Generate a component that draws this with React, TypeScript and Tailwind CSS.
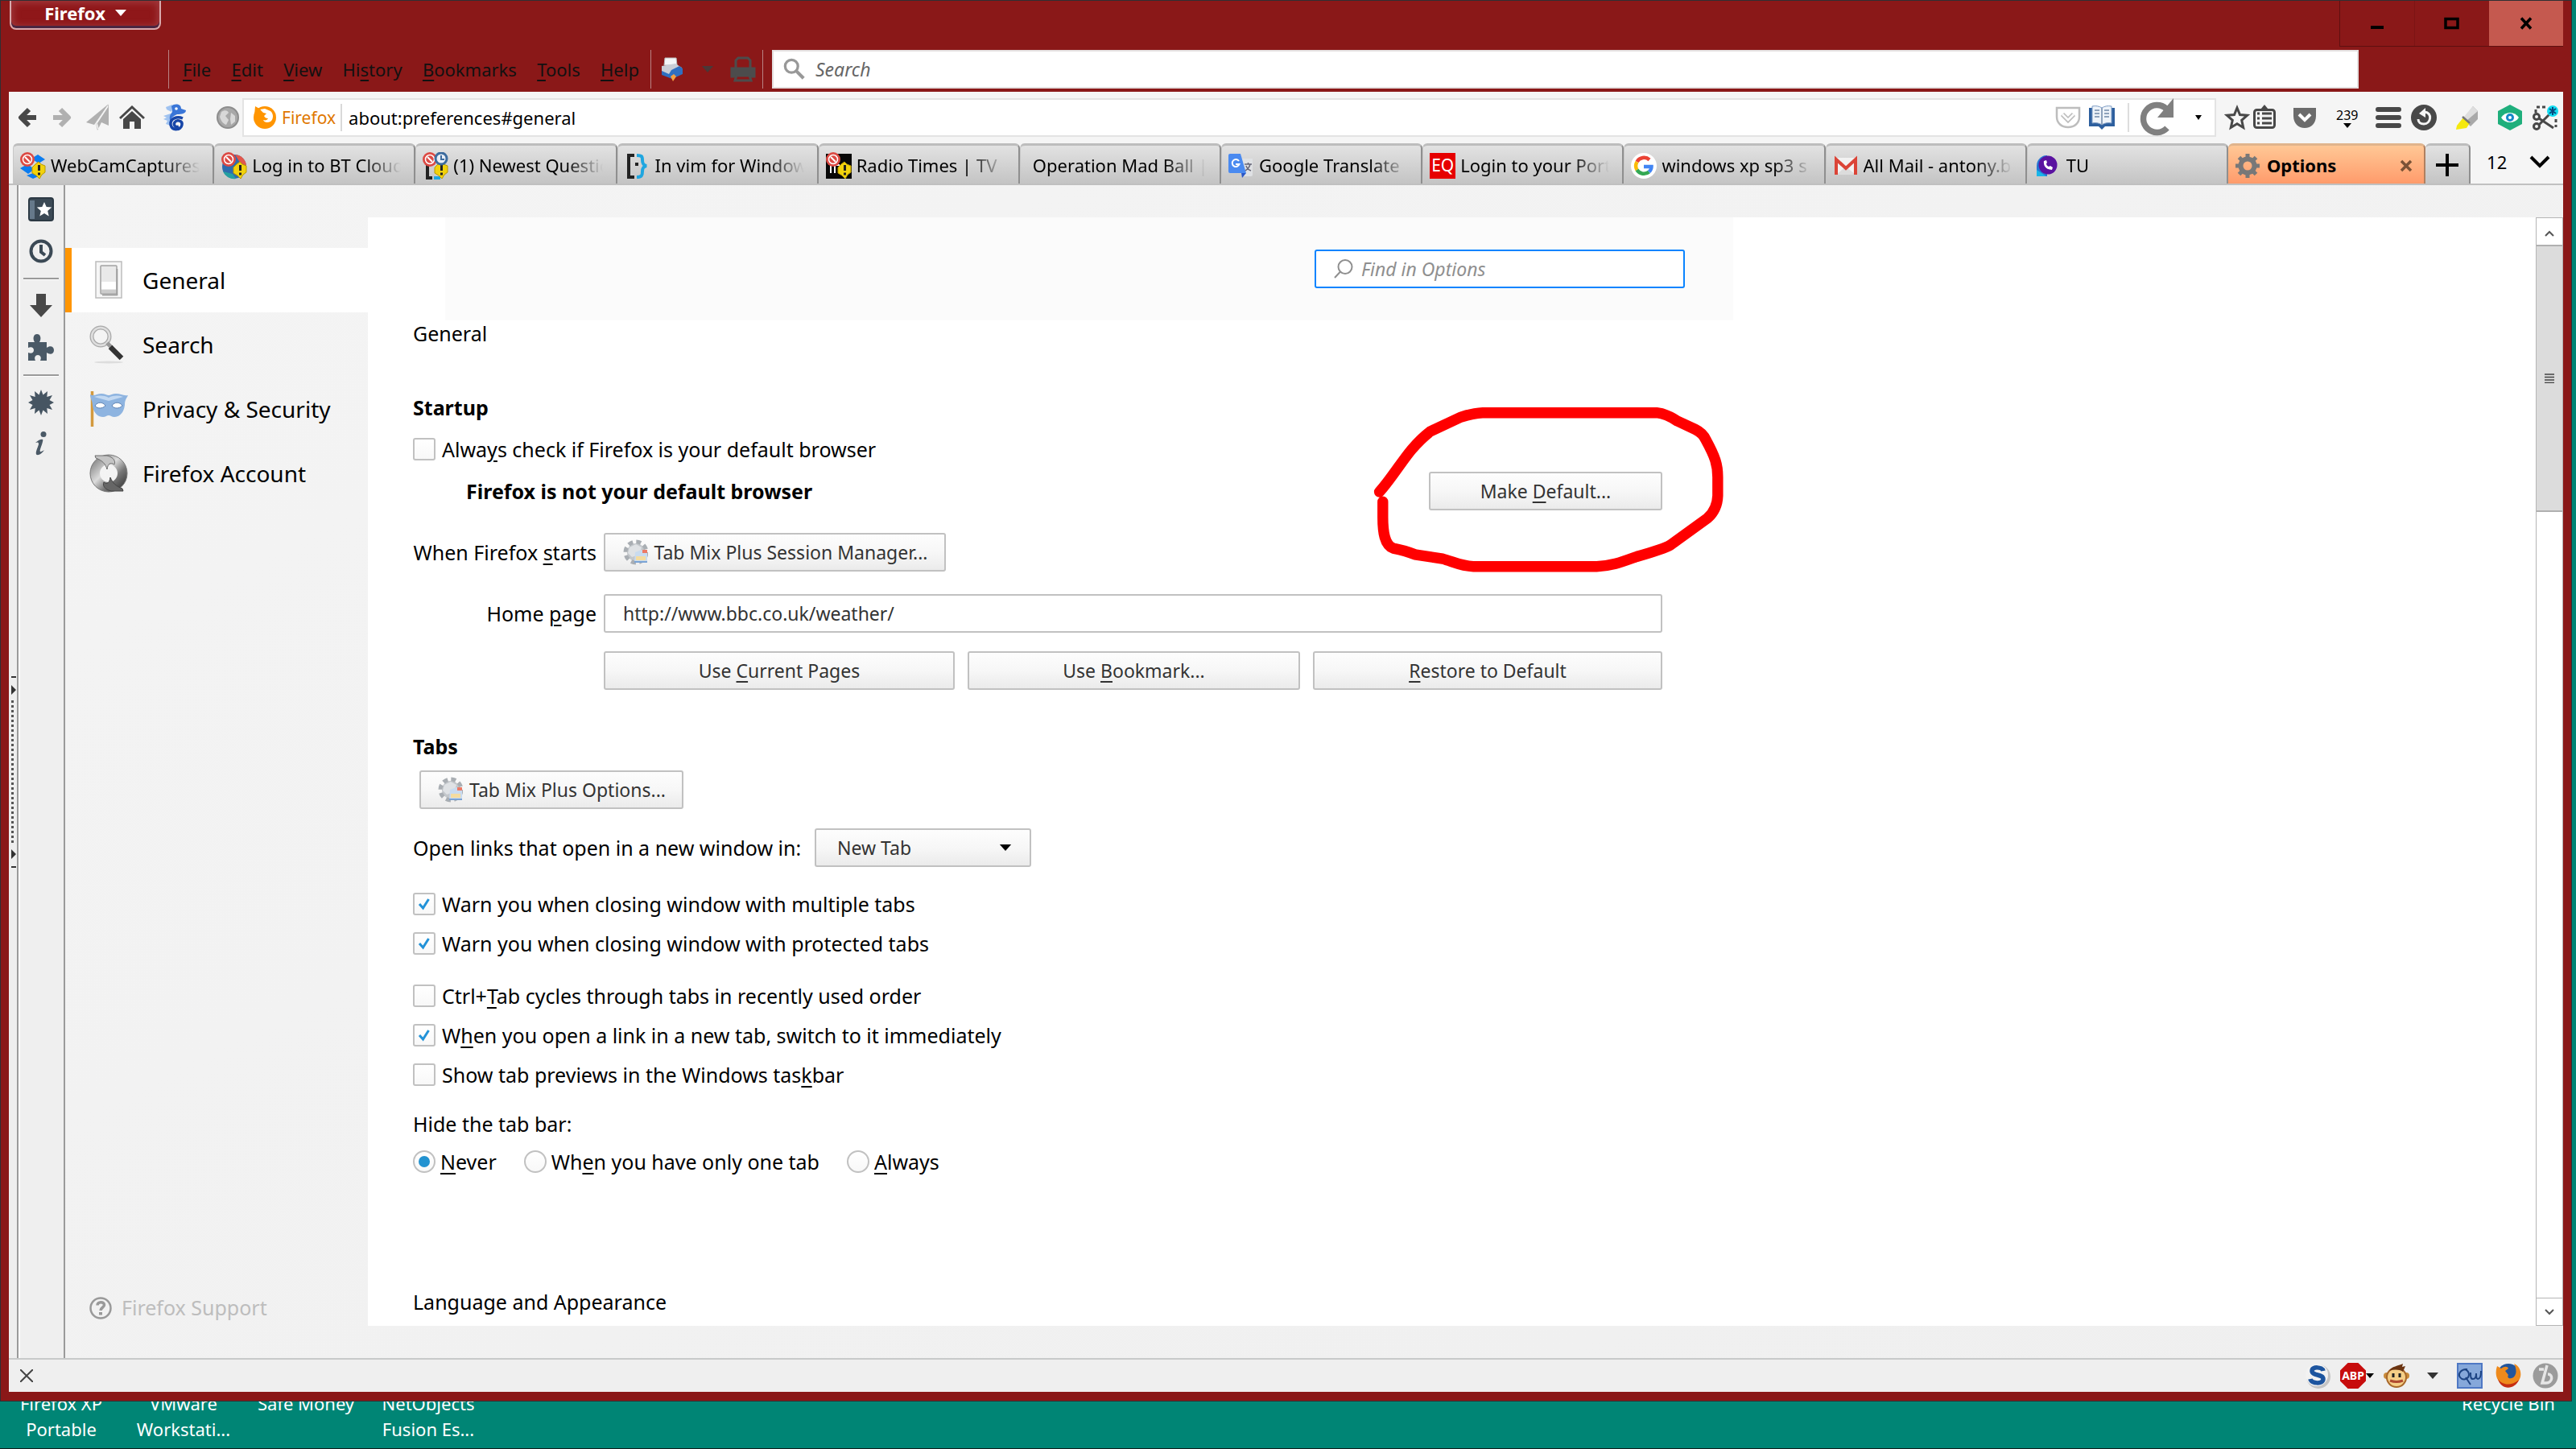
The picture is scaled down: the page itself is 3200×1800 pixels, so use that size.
import type { ReactNode } from "react";

/* ---------- shared pieces ---------- */

function Key({ children }: { children: ReactNode }) {
  return <span className="underline decoration-2 underline-offset-4">{children}</span>;
}

function PushButton({ children, className = "" }: { children: ReactNode; className?: string }) {
  return (
    <button
      type="button"
      className={`flex h-12 items-center justify-center whitespace-nowrap rounded-[3px] border-2 border-[#c1c1c1] bg-linear-to-b from-[#fdfdfd] via-[#f7f7f7] via-50% to-[#ebebeb] text-[23px] text-[#333] ${className}`}
    >
      {children}
    </button>
  );
}

function Check({ id, checked, children, className = "" }: { id: string; checked?: boolean; children: ReactNode; className?: string }) {
  return (
    <div className={`flex h-8 items-center ${className}`}>
      <span className="grid size-7 shrink-0">
        <input
          id={id}
          type="checkbox"
          defaultChecked={checked}
          className="peer col-start-1 row-start-1 size-7 appearance-none rounded-[3px] border-2 border-[#c1c1c1] bg-linear-to-b from-white to-[#f8f8f8]"
        />
        <svg viewBox="0 0 28 28" className="pointer-events-none invisible col-start-1 row-start-1 size-7 peer-checked:visible">
          <path d="M8 14l4.500 5L19.500 8" fill="none" stroke="#2292d8" strokeWidth="3" />
        </svg>
      </span>
      <label htmlFor={id} className="pl-2 whitespace-nowrap">{children}</label>
    </div>
  );
}

function Radio({ id, checked, children }: { id: string; checked?: boolean; children: ReactNode }) {
  return (
    <div className="flex items-center">
      <span className="grid size-7 shrink-0 place-items-center">
        <input
          id={id}
          name="hide-tab-bar"
          type="radio"
          defaultChecked={checked}
          className="peer col-start-1 row-start-1 size-7 appearance-none rounded-full border-2 border-[#c1c1c1] bg-linear-to-b from-white to-[#f8f8f8]"
        />
        <span className="pointer-events-none invisible col-start-1 row-start-1 size-3.5 rounded-full bg-[#2292d0] peer-checked:visible" />
      </span>
      <label htmlFor={id} className="pl-1.5 whitespace-nowrap">{children}</label>
    </div>
  );
}

function IconButton({ label, children, className = "" }: { label: string; children: ReactNode; className?: string }) {
  return (
    <button type="button" aria-label={label} className={`flex shrink-0 items-center justify-center ${className}`}>
      {children}
    </button>
  );
}

/* ---------- tab icons ---------- */

function Badges() {
  return (
    <>
      <circle cx="9" cy="9" r="9" fill="#dc4a44" />
      <circle cx="9" cy="9" r="5.500" fill="#dc4a44" stroke="#fff" strokeWidth="1.500" />
      <path d="M6 6l6 6" stroke="#fff" strokeWidth="2" />
      <path d="M23 12l3 3 5 2v8l-4 3-3 5-4-4-5-3v-7l4-4z" fill="#f2d20c" stroke="#b99a00" />
      <path d="M23.500 16v7M23.500 25.500v3" stroke="#222" strokeWidth="3" />
    </>
  );
}

function DropboxIcon() {
  return (
    <svg viewBox="0 0 32 34" className="h-[34px] w-8 shrink-0">
      <path d="M22 3l9 6-8 5-9-6zM0 20l9-5 9 6-8 6zM16 26l9 3-9 4-8-4z" fill="#0a7cf0" />
      <Badges />
    </svg>
  );
}

function BtIcon() {
  return (
    <svg viewBox="0 0 32 34" className="h-[34px] w-8 shrink-0">
      <circle cx="16" cy="18" r="15" fill="#2d6cae" />
      <path d="M17 3a15 15 0 0 1 14 14l-8-4z" fill="#e2574b" />
      <path d="M2 24a15 15 0 0 0 16 9l-4-6z" fill="#25a0a0" />
      <Badges />
    </svg>
  );
}

function QuestionsIcon() {
  return (
    <svg viewBox="0 0 32 34" className="h-[34px] w-8 shrink-0">
      <path d="M12 12H6v20h6" fill="none" stroke="#222" strokeWidth="4" />
      <path d="M14 32h8" stroke="#1fa6e0" strokeWidth="4" />
      <Badges />
      <circle cx="23" cy="8" r="7" fill="#e8eef6" stroke="#3d6c9e" strokeWidth="3" />
      <path d="M23 4v5h4" fill="none" stroke="#3d6c9e" strokeWidth="2" />
    </svg>
  );
}

function ViIcon() {
  return (
    <svg viewBox="0 0 32 34" className="h-[34px] w-8 shrink-0">
      <path d="M12 4H5v27h7" fill="none" stroke="#222" strokeWidth="4" />
      <path d="M15 4c6 0 7 1 7 6 0 4 1 6 5 7-4 1-5 3-5 7 0 5-1 7-7 7" fill="none" stroke="#1fa6e0" strokeWidth="4" />
      <rect x="13" y="13" width="4" height="4" fill="#222" />
    </svg>
  );
}

function RadioTimesIcon() {
  return (
    <svg viewBox="0 0 32 34" className="h-[34px] w-8 shrink-0">
      <rect y="2" width="32" height="31" fill="#080808" />
      <path d="M6 26V16h5v10M12 16h5" stroke="#fff" strokeWidth="2" fill="none" />
      <Badges />
    </svg>
  );
}

function TranslateIcon() {
  return (
    <svg viewBox="0 0 32 32" className="size-8 shrink-0">
      <path d="M14 7h16v20a2 2 0 0 1-2 2H17z" fill="#dfe1e4" />
      <path d="M2 1h13l7 24H2a2 2 0 0 1-2-2V3a2 2 0 0 1 2-2z" fill="#4a8af0" />
      <path d="M16 25h6l-5 6z" fill="#2a56c6" />
      <path d="M13 10a4.500 4.500 0 1 0 .5 4H9" fill="none" stroke="#fff" strokeWidth="2" />
      <path d="M20 14h9M24.500 12v2M27 14c-1 4-3 6-6 8M22 16c1 3 3 5 6 6" fill="none" stroke="#667" strokeWidth="1.500" />
    </svg>
  );
}

function EqIcon() {
  return (
    <span className="flex size-8 shrink-0 items-center justify-center bg-[#e60000] text-[21px] text-white">EQ</span>
  );
}

function GoogleIcon() {
  return (
    <svg viewBox="0 0 32 32" className="size-8 shrink-0">
      <circle cx="16" cy="16" r="16" fill="#fff" />
      <path d="M23 8.500A10 10 0 0 0 7.500 11" fill="none" stroke="#ea4335" strokeWidth="4.500" />
      <path d="M7.500 11a10 10 0 0 0 0 10" fill="none" stroke="#fbbc05" strokeWidth="4.500" />
      <path d="M7.500 21a10 10 0 0 0 15 2.500" fill="none" stroke="#34a853" strokeWidth="4.500" />
      <path d="M22.500 23.500c2-2 3-4 3-6.500H16" fill="none" stroke="#4285f4" strokeWidth="4.500" />
    </svg>
  );
}

function GmailIcon() {
  return (
    <svg viewBox="0 0 32 32" className="size-8 shrink-0">
      <rect x="2" y="6" width="28" height="21" rx="2" fill="#f2f2f2" />
      <path d="M4 27l12-10 12 10z" fill="#dcdcdc" />
      <path d="M4 27V8l12 11L28 8v19" fill="none" stroke="#db4437" strokeWidth="4" />
    </svg>
  );
}

function TuIcon() {
  return (
    <svg viewBox="0 0 34 26" className="h-[26px] w-[34px] shrink-0">
      <path d="M3 13A13 13 0 0 1 16 0v26H3z" fill="#2477d4" />
      <path d="M3 18l12 8H3z" fill="#19b5e8" />
      <circle cx="17" cy="12" r="11.500" fill="#5a12a0" />
      <path d="M12 7c-1 6 3 11 10 11l1-3-3-2-2 1c-2-1-3-2-3-4l1-1-1-3z" fill="#fff" />
    </svg>
  );
}

function GearIcon() {
  return (
    <svg viewBox="0 0 32 32" className="size-8 shrink-0">
      <circle cx="16" cy="16" r="8.500" fill="none" stroke="#787878" strokeWidth="6" />
      <path
        d="M16 1v6M16 25v6M1 16h6M25 16h6M5.500 5.500l4 4M22.500 22.500l4 4M5.500 26.500l4-4M22.500 9.500l4-4"
        stroke="#787878"
        strokeWidth="5"
      />
    </svg>
  );
}

/* ---------- browser chrome ---------- */

function TitleBar() {
  return (
    <div className="flex h-[61px] items-start justify-between">
      <button
        type="button"
        className="ml-px flex h-9 w-[188px] items-center justify-center gap-3 rounded-b-lg border-2 border-t-0 border-[#d9a9ac] bg-[#8f1719] pb-1 text-[22px] font-bold text-white shadow-[inset_0_-3px_0_#4a2540,inset_0_0_8px_3px_#a0383c]"
      >
        <span>Firefox</span>
        <svg viewBox="0 0 14 8" className="h-2 w-3.5"><path d="M0 0h14L7 8z" fill="#fff" /></svg>
      </button>
      <div className="flex h-[57px] border-b border-l border-[#5e1010]">
        <IconButton label="Minimise" className="w-[93px] border-r border-[#7c1414]">
          <svg viewBox="0 0 20 20" className="size-5"><rect x="2" y="13" width="16" height="4" /></svg>
        </IconButton>
        <IconButton label="Maximise" className="w-[92px]">
          <svg viewBox="0 0 20 20" className="size-5"><rect x="2" y="4.500" width="15" height="11" fill="none" stroke="#000" strokeWidth="3.500" /></svg>
        </IconButton>
        <IconButton label="Close" className="w-[92px] bg-[#c5594f]">
          <svg viewBox="0 0 20 20" className="size-5"><path d="M4 3.500l12 13M16 3.500l-12 13" stroke="#000" strokeWidth="3.500" /></svg>
        </IconButton>
      </div>
    </div>
  );
}

function MenuBar() {
  return (
    <div className="mb-1 flex h-12 items-stretch pl-[198px]">
      <nav className="flex w-[599px] items-center justify-between border-l border-[#b98384] pr-3.5 pl-[17px] text-[22px] text-[#111]">
        <button type="button"><Key>F</Key>ile</button>
        <button type="button"><Key>E</Key>dit</button>
        <button type="button"><Key>V</Key>iew</button>
        <button type="button">Hi<Key>s</Key>tory</button>
        <button type="button"><Key>B</Key>ookmarks</button>
        <button type="button"><Key>T</Key>ools</button>
        <button type="button"><Key>H</Key>elp</button>
      </nav>
      <div className="mr-[11px] flex w-[140px] items-center border-x border-[#b98384] pl-2.5">
        <IconButton label="Print" className="w-8">
          <svg viewBox="0 0 32 32" className="size-8">
            <path d="M7 2h14l1 9H6z" fill="#f4f6f8" stroke="#bbb" />
            <path d="M3 12l17-3 8 5v6l-12 5L3 19z" fill="#c9ced6" />
            <path d="M3 18l9 4 3-5 10-5 4 3v7l-13 6-13-5z" fill="#2f6fc0" />
            <path d="M14 25l4-3 3 3-4 6z" fill="#f5a040" />
          </svg>
        </IconButton>
        <svg viewBox="0 0 16 9" className="ml-5 h-2 w-4"><path d="M0 0h16L8 9z" fill="#4a3838" /></svg>
        <IconButton label="Print preview" className="ml-5 w-8">
          <svg viewBox="0 0 32 32" className="size-8" fill="none" stroke="#4c4c4c" strokeWidth="3">
            <path d="M7 14V5l3-3h12l3 3v9" />
            <path d="M2 15h28v10H2z" fill="#4c4c4c" />
            <path d="M8 24h16l2 6H6z" fill="#8a1818" />
          </svg>
        </IconButton>
      </div>
      <div className="mr-[254px] flex flex-1 items-center border-2 border-[#e5e0e0] bg-white pl-3">
        <svg viewBox="0 0 30 30" className="size-7" fill="none" stroke="#989898">
          <circle cx="11" cy="11" r="8.500" strokeWidth="3.500" />
          <path d="M17 17l10 10" strokeWidth="4.500" />
        </svg>
        <input
          aria-label="Search the web"
          placeholder="Search"
          className="min-w-0 flex-1 pl-3 text-[23px] text-black outline-none placeholder:text-[#666] placeholder:italic"
        />
      </div>
    </div>
  );
}

function Toolbar() {
  return (
    <div className="flex h-16 items-center bg-[#f5f5f5] pl-[11px]">
      <IconButton label="Back" className="w-6">
        <svg viewBox="0 0 24 26" className="h-[26px] w-6" fill="none" stroke="#484848" strokeWidth="6" strokeLinejoin="round">
          <path d="M14 3L4 13l10 10M4 13h19" />
        </svg>
      </IconButton>
      <IconButton label="Forward" className="ml-[19px] w-6">
        <svg viewBox="0 0 24 26" className="h-[26px] w-6" fill="none" stroke="#b0b0b0" strokeWidth="6" strokeLinejoin="round">
          <path d="M10 3l10 10-10 10M20 13H1" />
        </svg>
      </IconButton>
      <IconButton label="Send" className="ml-[17px] w-8">
        <svg viewBox="0 0 32 34" className="h-[34px] w-8" fill="#b0b0b0">
          <path d="M29 0L1 23l10 3z" />
          <path d="M29 1v26l-9-4-5 10-2-9z" />
          <path d="M28 3L14 24l2 7" fill="none" stroke="#f5f5f5" strokeWidth="1.500" />
        </svg>
      </IconButton>
      <IconButton label="Home" className="ml-2.5 w-8">
        <svg viewBox="0 0 32 30" className="h-[30px] w-8">
          <path d="M1 16L16 2l15 14" fill="none" stroke="#484848" strokeWidth="3" />
          <path d="M5 17L16 7l11 10v12h-8v-9h-6v9H5z" fill="#484848" />
        </svg>
      </IconButton>
      <IconButton label="Seahorse" className="ml-[22px] w-8">
        <svg viewBox="0 0 32 34" className="h-[34px] w-8">
          <path d="M1 15l9-3v15l-6-2 2-4-5-2 4-2zM4 4l8-3-1 9-6-3z" fill="#9fc2f0" />
          <path d="M11 3c4-4 12-3 12 3l6 2c0 4-5 5-11 5-4 2-8 4-8 10-3-8 0-10 2-13z" fill="#3a76d8" />
          <path d="M20 28c-4 2-7-2-5-5 3-4 10-2 9 3-1 7-12 8-14 0-1-8 8-11 15-8" fill="none" stroke="#1746a8" strokeWidth="3.500" />
          <circle cx="17" cy="6" r="1.800" fill="#fff" />
        </svg>
      </IconButton>
      <IconButton label="Site identity" className="ml-[35px] w-7">
        <svg viewBox="0 0 28 28" className="size-7">
          <circle cx="14" cy="14" r="13" fill="#a8a8a8" stroke="#8d8d8d" strokeWidth="2" />
          <path d="M6 7c4-3 8-2 9 1l-4 4 4 5-3 6c-4-1-7-6-8-10zM18 8l5 4v7l-5 4-1-7z" fill="#d8d8d8" />
        </svg>
      </IconButton>
      <div className="ml-1 flex h-12 min-w-0 flex-1 items-center border-2 border-[#e3e3e3] bg-white pl-3">
        <svg viewBox="0 0 28 28" className="size-7 shrink-0">
          <circle cx="14" cy="14" r="14" fill="#ff9500" />
          <path d="M8 4l6-1 7 3c4 3 4 10 0 13-4 2-8 1-9-2 3 1 5 0 6-2-3 0-4-1-5-3l3-3-4-1-2-2z" fill="#fff" />
          <path d="M2 0l7 4-8 7z" fill="#ff9500" />
        </svg>
        <span className="ml-[7px] border-r-2 border-[#d9d9d9] pr-1.5 text-[21px] leading-[34px] text-[#e07800]">Firefox</span>
        <input
          aria-label="Address"
          defaultValue="about:preferences#general"
          className="min-w-0 flex-1 pl-2 text-[22px] text-black outline-none"
        />
        <IconButton label="Save to Pocket" className="w-8">
          <svg viewBox="0 0 32 28" className="h-7 w-8" fill="none" stroke="#bdbdbd" strokeWidth="2.500">
            <path d="M2 2h28v11c0 8-6 13-14 13S2 21 2 13z" />
            <path d="M9 10l7 7 7-7" strokeWidth="6" />
            <path d="M9 10l7 7 7-7" stroke="#fff" strokeWidth="2.500" />
          </svg>
        </IconButton>
        <IconButton label="Reader view" className="ml-2.5 w-8">
          <svg viewBox="0 0 32 32" className="size-8">
            <path d="M0 4h32v23H20l-4 4-4-4H0z" fill="#2d5f9e" />
            <path d="M4 2c5-1 9 0 12 2 3-2 7-3 12-2v21c-5-1-9 0-12 2-3-2-7-3-12-2z" fill="#eef3f9" stroke="#7d9cc4" />
            <path d="M16 4v21M7 7h6M7 11h6M7 15h6M19 7h6M19 11h6M19 15h6" stroke="#8ea2bb" strokeWidth="2" />
          </svg>
        </IconButton>
        <span className="ml-4 h-9 w-0.5 bg-[#ddd]" />
        <IconButton label="Reload" className="ml-2.5 w-12">
          <svg viewBox="0 0 48 48" className="size-12">
            <path d="M37 37a17 17 0 1 1-1-24" fill="none" stroke="#808080" strokeWidth="7.500" />
            <path d="M45 0v24H25z" fill="#808080" />
          </svg>
        </IconButton>
        <IconButton label="Reload options" className="mr-4 ml-6 w-2">
          <svg viewBox="0 0 8 6" className="h-1.5 w-2"><path d="M0 0h8L4 6z" /></svg>
        </IconButton>
      </div>
      <div className="flex w-[431px] shrink-0 items-center justify-between pr-1.5 pl-2.5">
        <div className="flex gap-1">
          <IconButton label="Bookmark this page">
            <svg viewBox="0 0 32 32" className="size-8">
              <path d="M16 4l3.500 8.500 9 .8-6.800 6 2 9.200L16 23.800 8.300 28.500l2-9.200-6.800-6 9-.8z" fill="none" stroke="#484848" strokeWidth="3" />
            </svg>
          </IconButton>
          <IconButton label="Bookmarks">
            <svg viewBox="0 0 28 32" className="h-8 w-7">
              <path d="M9 6l5-6 5 6z" fill="#484848" />
              <rect x="1.500" y="6.500" width="25" height="22" rx="3" fill="none" stroke="#484848" strokeWidth="3" />
              <path d="M5 11h3M11 11h12M5 17h3M11 17h12M5 23h3M11 23h12" stroke="#484848" strokeWidth="3" />
            </svg>
          </IconButton>
        </div>
        <IconButton label="Pocket">
          <svg viewBox="0 0 28 26" className="h-[26px] w-7">
            <path d="M0 1h28v10c0 9-6 15-14 15S0 20 0 11z" fill="#6b6b6b" />
            <path d="M7 9l7 7 7-7" fill="none" stroke="#fff" strokeWidth="4" />
          </svg>
        </IconButton>
        <button type="button" className="flex flex-col items-center pl-1 text-base leading-5">
          239
          <svg viewBox="0 0 10 6" className="h-1.5 w-2.5"><path d="M0 0h10L5 6z" /></svg>
        </button>
        <div className="flex gap-3">
          <IconButton label="Menu">
            <svg viewBox="0 0 32 28" className="h-7 w-8"><path d="M3 4h26M3 14h26M3 24h26" stroke="#484848" strokeWidth="6" strokeLinecap="round" /></svg>
          </IconButton>
          <IconButton label="Restore session">
            <svg viewBox="0 0 32 32" className="size-8">
              <circle cx="16" cy="16" r="16" fill="#484848" />
              <path d="M17 9c10 1 8 15-1 15-4 0-7-2-7-6" fill="none" stroke="#f5f5f5" strokeWidth="3" />
              <path d="M10 11l8-7v12z" fill="#f5f5f5" />
            </svg>
          </IconButton>
        </div>
        <IconButton label="Highlighter">
          <svg viewBox="0 0 32 30" className="h-[30px] w-8">
            <path d="M24 1l6 6v10l-9 9-9-9z" fill="#a9a9a9" />
            <path d="M24 1L12 15l4 4L30 7z" fill="#dedede" />
            <path d="M12 15l8 7-4 6-13 2 1-5z" fill="#f5e90f" />
            <path d="M11 14l9 8" stroke="#777" strokeWidth="2.500" />
          </svg>
        </IconButton>
        <div className="flex items-center gap-3">
          <IconButton label="Privacy watch">
            <svg viewBox="0 0 32 32" className="size-8">
              <path d="M16 0l15 8v16l-15 8L1 24V8z" fill="#1faf7c" />
              <path d="M5 16c5-8 17-8 22 0-5 8-17 8-22 0z" fill="#fff" />
              <circle cx="16" cy="16" r="5" fill="#1688c8" />
              <circle cx="16" cy="16" r="2" fill="#fff" />
            </svg>
          </IconButton>
          <IconButton label="Screen capture">
            <svg viewBox="0 0 32 32" className="size-8" fill="none" stroke="#484848" strokeWidth="3">
              <path d="M5 3h14M29 18v10M4 6v4" strokeDasharray="4 3" />
              <circle cx="5" cy="15" r="3.500" />
              <circle cx="5" cy="27" r="3.500" />
              <path d="M8 17l18 12M8 25l13-13" />
              <circle cx="25" cy="8" r="7" fill="#12dcf0" stroke="none" />
              <path d="M25 3v10M21 5l8 6M29 5l-8 6" strokeWidth="2" stroke="#064a80" />
            </svg>
          </IconButton>
        </div>
      </div>
    </div>
  );
}

const tabs: { title: string; icon?: ReactNode }[] = [
  { title: "WebCamCaptures", icon: <DropboxIcon /> },
  { title: "Log in to BT Cloud", icon: <BtIcon /> },
  { title: "(1) Newest Questions", icon: <QuestionsIcon /> },
  { title: "In vim for Windows", icon: <ViIcon /> },
  { title: "Radio Times | TV", icon: <RadioTimesIcon /> },
  { title: "Operation Mad Ball |" },
  { title: "Google Translate", icon: <TranslateIcon /> },
  { title: "Login to your Portfolio", icon: <EqIcon /> },
  { title: "windows xp sp3 s", icon: <GoogleIcon /> },
  { title: "All Mail - antony.b", icon: <GmailIcon /> },
  { title: "TU", icon: <TuIcon /> },
];

function TabStrip() {
  return (
    <div className="flex h-[52px] border-b-2 border-[#c0c0c0] bg-[#f5f5f5] pl-[5px]">
      {tabs.map((tab) => (
        <button
          key={tab.title}
          type="button"
          className="flex min-w-0 flex-1 basis-0 items-center gap-1.5 rounded-t-md border-t-[3px] border-r-2 border-l border-t-[#bdbdbd] border-r-[#8f8f8f] border-l-[#c8c8c8] bg-linear-to-b from-[#e2e2e2] to-[#c4c4c4] pt-0.5 pr-4 pl-2 text-[22px] text-black"
        >
          {tab.icon ?? <span className="w-px" />}
          <span className="min-w-0 flex-1 overflow-hidden text-left whitespace-nowrap [mask-image:linear-gradient(to_right,black_75%,transparent)]">
            {tab.title}
          </span>
        </button>
      ))}
      <div className="flex min-w-0 flex-1 basis-0 items-center rounded-t-md border-t-[3px] border-r-2 border-t-[#e0b48c] border-r-[#b08060] bg-linear-to-b from-[#ffc795] to-[#ff9b6b] pt-0.5 pr-3 pl-2">
        <GearIcon />
        <button type="button" className="flex-1 pl-2 text-left text-[22px] font-bold text-black">Options</button>
        <IconButton label="Close tab" className="w-5">
          <svg viewBox="0 0 16 16" className="size-4"><path d="M2 2l12 12M14 2L2 14" stroke="#7a5236" strokeWidth="3.500" /></svg>
        </IconButton>
      </div>
      <IconButton label="New tab" className="w-[56px] rounded-t-md border-t-[3px] border-r-2 border-t-[#bdbdbd] border-r-[#8f8f8f] bg-linear-to-b from-[#e2e2e2] to-[#c4c4c4]">
        <svg viewBox="0 0 28 28" className="size-7"><path d="M14 0v28M0 14h28" stroke="#000" strokeWidth="4" /></svg>
      </IconButton>
      <button type="button" className="flex w-[115px] items-center justify-between pr-4 pb-1 pl-5 text-[22px]">
        12
        <svg viewBox="0 0 26 16" className="h-4 w-[26px]"><path d="M2 2l11 11L24 2" fill="none" stroke="#000" strokeWidth="4" /></svg>
      </button>
    </div>
  );
}

/* ---------- left icon strip ---------- */

function Splitter() {
  return (
    <div className="flex w-3 shrink-0 flex-col justify-center border-r-2 border-[#9a9a9a] bg-[#eee]">
      <svg viewBox="0 0 8 240" className="h-[240px] w-2 self-end">
        <path d="M1 2h6M1 238h6" stroke="#333" strokeWidth="2" />
        <path d="M1 12l6 6-6 6zM1 216l6 6-6 6z" fill="#333" />
        <path d="M2.500 31v180" stroke="#555" strokeWidth="3" strokeDasharray="3 3" />
      </svg>
    </div>
  );
}

function IconStrip() {
  return (
    <div className="flex w-[58px] shrink-0 flex-col items-center border-r-2 border-l-2 border-l-white border-r-[#9a9a9a] bg-[#efefef] pt-[15px] pr-0.5">
      <IconButton label="Bookmarks sidebar">
        <svg viewBox="0 0 32 30" className="h-[30px] w-8">
          <rect x="1" y="1" width="30" height="28" rx="3" fill="#3b4955" stroke="#2c3944" strokeWidth="2" />
          <rect x="2" y="4" width="6" height="23" fill="#66798a" />
          <path d="M20 6l2.700 6 6.500.6-5 4.300 1.500 6.600-5.700-3.500-5.700 3.500 1.500-6.600-5-4.300 6.500-.6z" fill="#fff" />
        </svg>
      </IconButton>
      <IconButton label="History sidebar" className="mt-[22px]">
        <svg viewBox="0 0 30 30" className="size-[30px]" fill="none" stroke="#3b4955">
          <circle cx="15" cy="15" r="12.500" strokeWidth="4" />
          <path d="M15 7v9l5 4" strokeWidth="4" />
        </svg>
      </IconButton>
      <span className="mt-[18px] h-[3px] w-11 border-t-2 border-b border-t-[#9a9a9a] border-b-white" />
      <IconButton label="Downloads" className="mt-4">
        <svg viewBox="0 0 28 30" className="h-[30px] w-7"><path d="M8 1h12v14h8L14 30 0 15h8z" fill="#484848" /></svg>
      </IconButton>
      <IconButton label="Add-ons" className="mt-5">
        <svg viewBox="0 0 32 34" className="h-[34px] w-8">
          <path
            d="M0 11h8c-3-5-1-10 3-10s6 5 3 10h9v7c4-3 9-2 9 3s-5 6-9 3v10h-8c2-4 0-7-3-7s-5 3-3 7H0V24c4 2 7 0 7-3s-3-5-7-3z"
            fill="#4a5966"
          />
        </svg>
      </IconButton>
      <span className="mt-[17px] h-[3px] w-11 border-t-2 border-b border-t-[#9a9a9a] border-b-white" />
      <IconButton label="Options sidebar" className="mt-4">
        <svg viewBox="0 0 32 32" className="size-8">
          <path
            d="M16 0l2.500 6.500L24 2l-.7 7 6.700-2-3.500 6 5.500 3-5.500 3 3.500 6-6.700-2 .7 7-5.500-4.500L16 32l-2.500-6.500L8 30l.7-7L2 25l3.500-6L0 16l5.500-3L2 7l6.700 2L8 2l5.500 4.500z"
            fill="#465562"
          />
        </svg>
      </IconButton>
      <IconButton label="Page info" className="mt-5">
        <svg viewBox="0 0 16 30" className="h-[30px] w-4">
          <circle cx="11" cy="3.500" r="3.500" fill="#4a5966" />
          <path d="M1 14c4-4 8-5 9-4s-1 6-3 12c-1 4 0 4 5 1-3 5-9 8-10 5-1-2 1-6 3-12 0-3-1-3-4-2z" fill="#4a5966" />
        </svg>
      </IconButton>
    </div>
  );
}

/* ---------- category icons ---------- */

function SwitchIcon() {
  return (
    <svg viewBox="0 0 48 48" className="size-12">
      <rect x="8" y="1" width="32" height="45" fill="#f6f6f6" stroke="#bcbcbc" strokeWidth="1.500" />
      <rect x="14" y="6" width="20" height="35" rx="1" fill="#e9e9e9" stroke="#a2a2a2" strokeWidth="1.500" />
      <rect x="15" y="26" width="18" height="9" fill="#fff" />
      <path d="M15 38h18" stroke="#ccc" strokeWidth="4" />
      <path d="M16 42.500h18.500V10" fill="none" stroke="#999" strokeWidth="1.500" />
    </svg>
  );
}

function LoupeIcon() {
  return (
    <svg viewBox="0 0 48 48" className="size-12">
      <ellipse cx="24" cy="46" rx="18" ry="1.500" fill="#ddd" />
      <circle cx="14" cy="14" r="11" fill="#f4f4f4" stroke="#a9a9a9" strokeWidth="5" />
      <circle cx="14" cy="14" r="11" fill="none" stroke="#dedede" strokeWidth="2.500" />
      <path d="M22 22l6 6" stroke="#999" strokeWidth="5" />
      <path d="M26 27l14 14" stroke="#333" strokeWidth="6.500" />
    </svg>
  );
}

function MaskIcon() {
  return (
    <svg viewBox="0 0 48 48" className="size-12">
      <path d="M3.500 2v44" stroke="#d39a3e" strokeWidth="3.500" />
      <path d="M1 6c5 3 8-1 14-1 4 0 7 2 9 2s5-2 9-2c6 0 9 3 15 2-1 3-4 5-4 12-1 9-6 15-13 15-3 0-5-2-7-2s-4 2-7 2C10 34 5 28 4 20c0-6-3-9-3-14z" fill="#8eb4e0" />
      <path d="M6 9c6-2 12-2 18 1 6-3 12-3 18-1-6 2-12 3-18 5-6-2-12-3-18-5z" fill="#c3d9f2" />
      <path d="M7 20c3-5 10-5 13 0-4 4-10 4-13 0zM28 20c3-5 10-5 13 0-4 4-10 4-13 0z" fill="#fff" stroke="#5f83b3" />
    </svg>
  );
}

function SyncIcon() {
  return (
    <svg viewBox="0 0 48 48" className="size-12">
      <defs>
        <linearGradient id="steel" x1="0" y1="0" x2="1" y2="1">
          <stop offset="0" stopColor="#8a8a8a" />
          <stop offset="0.4" stopColor="#dcdcdc" />
          <stop offset="0.7" stopColor="#777" />
          <stop offset="1" stopColor="#444" />
        </linearGradient>
      </defs>
      <circle cx="24" cy="24" r="17" fill="none" stroke="url(#steel)" strokeWidth="12" />
      <circle cx="24" cy="24" r="23" fill="none" stroke="#777" />
      <path d="M7 2h15c8 2 11 7 9 11-5-3-8-1-9 6-2-7-6-11-14-14z" fill="#c4c4c4" stroke="#6d6d6d" />
      <path d="M42 46H27c-8-2-11-7-9-11 4 3 7 1 8-6 3 7 7 11 15 14z" fill="#666" stroke="#444" />
    </svg>
  );
}

function Category({ icon, label, active }: { icon: ReactNode; label: string; active?: boolean }) {
  return (
    <a
      href={`#${label}`}
      className={`flex h-20 items-center border-l-8 pl-[22px] text-[28px] whitespace-nowrap text-black ${active ? "border-[#ff9500] bg-white" : "border-transparent"}`}
    >
      {icon}
      <span className="pl-[18px]">{label}</span>
    </a>
  );
}

function Categories() {
  return (
    <nav className="flex w-[376px] shrink-0 flex-col pt-[38px]">
      <Category icon={<SwitchIcon />} label="General" active />
      <Category icon={<LoupeIcon />} label="Search" />
      <Category icon={<MaskIcon />} label="Privacy & Security" />
      <Category icon={<SyncIcon />} label="Firefox Account" />
      <a href="#support" className="mt-auto flex h-11 items-center gap-3 pl-[30px] text-[25px] text-[#bdbdbd]">
        <svg viewBox="0 0 28 28" className="size-7" fill="none" stroke="#999">
          <circle cx="14" cy="14" r="12.500" strokeWidth="2.500" />
          <path d="M10 10.500c0-5 8.500-5 8.500-.5 0 3.500-4.500 3-4.500 7" strokeWidth="3.500" />
          <path d="M14 19v3.500" strokeWidth="4" />
        </svg>
        Firefox Support
      </a>
    </nav>
  );
}

/* ---------- preferences ---------- */

function MixIcon() {
  return (
    <svg viewBox="0 0 32 32" className="size-8">
      <circle cx="17" cy="16" r="11" fill="#c3c7cb" />
      <circle
        cx="17"
        cy="16"
        r="13"
        fill="none"
        stroke="#a9aeb3"
        strokeWidth="5"
        strokeDasharray="6 4.200"
      />
      <path d="M9 10l8-4 7 4-3 9-9 3-5-5z" fill="#dfe2e5" />
      <path d="M16 16l8-3 7 2v14H15z" fill="#c9dbef" />
      <path d="M17 21h12v5H17z" fill="#f4dca0" />
      <path d="M25 13h6v4h-6z" fill="#ec7a66" />
      <path d="M15 28h16" stroke="#7ba3d4" strokeWidth="2" />
    </svg>
  );
}

function RedCircle() {
  return (
    <svg viewBox="260 620 1180 580" className="pointer-events-none absolute -top-[89px] -left-[75px] h-[222px] w-[452px] max-w-none">
      <path
        d="M295 918C330 880 370 815 400 780Q430 745 460 722L560 675Q600 662 630 661H1195Q1225 664 1262 688L1320 715Q1345 727 1355 750C1385 805 1393 830 1393 870V930C1392 960 1380 985 1360 1003L1240 1090Q1220 1103 1130 1128C1080 1146 1050 1158 1000 1160H600C560 1159 535 1145 500 1135L410 1121Q380 1109 340 1101C312 1090 306 1050 306 1000V950"
        fill="none"
        stroke="#f00"
        strokeWidth="35"
        strokeLinecap="round"
        strokeLinejoin="round"
      />
    </svg>
  );
}

function Preferences() {
  return (
    <main className="min-w-0 flex-1 bg-white pb-3.5 pl-14 text-[25px] leading-8 text-black">
      <div className="ml-10 flex h-32 w-[1600px] items-center justify-end bg-[#fbfbfb] pr-[60px]">
        <div className="flex h-12 w-[460px] items-center gap-2.5 rounded-[3px] border-2 border-[#0a84ff] bg-white pl-[22px]">
          <svg viewBox="0 0 24 24" className="size-6" fill="none" stroke="#8f8f8f" strokeWidth="2">
            <circle cx="14" cy="9.500" r="8.500" />
            <path d="M8 15.500l-7 7.500" />
          </svg>
          <input
            aria-label="Find in Options"
            placeholder="Find in Options"
            className="min-w-0 flex-1 text-[23px] outline-none placeholder:text-[#8f8f8f] placeholder:italic"
          />
        </div>
      </div>

      <div className="w-[1552px]">
        <h1 className="h-8">General</h1>

        <h2 className="mt-[60px] h-8 font-bold">Startup</h2>
        <Check id="always-check" className="mt-5">Alwa<Key>y</Key>s check if Firefox is your default browser</Check>
        <div className="mt-3 flex items-center justify-between pl-[66px]">
          <p className="font-bold">Firefox is not your default browser</p>
          <div className="relative">
            <PushButton className="w-[290px]">Make&nbsp;<Key>D</Key>efault...</PushButton>
            <RedCircle />
          </div>
        </div>
        <div className="mt-7 flex items-center gap-[9px]">
          <span className="w-[228px] text-right whitespace-nowrap">When Firefox <Key>s</Key>tarts</span>
          <PushButton className="w-[425px] gap-2"><MixIcon />Tab Mix Plus Session Manager...</PushButton>
        </div>
        <div className="mt-7 flex items-center gap-[9px]">
          <label htmlFor="home-page" className="w-[228px] text-right">Home <Key>p</Key>age</label>
          <input
            id="home-page"
            defaultValue="http://www.bbc.co.uk/weather/"
            className="h-12 min-w-0 flex-1 rounded-[3px] border-2 border-[#c1c1c1] bg-white pl-[22px] text-[23px] text-[#333]"
          />
        </div>
        <div className="mt-[23px] flex gap-4 pl-[237px]">
          <PushButton className="w-[436px]">Use&nbsp;<Key>C</Key>urrent Pages</PushButton>
          <PushButton className="w-[413px]">Use&nbsp;<Key>B</Key>ookmark...</PushButton>
          <PushButton className="flex-1"><Key>R</Key>estore to Default</PushButton>
        </div>

        <h2 className="mt-[54px] h-8 font-bold">Tabs</h2>
        <PushButton className="mt-3.5 ml-2 w-[328px] gap-2"><MixIcon />Tab Mix Plus Options...</PushButton>
        <div className="mt-6 flex items-center gap-[9px]">
          <label htmlFor="open-in" className="w-[490px] whitespace-nowrap">Open links that open in a new window in:</label>
          <div className="relative w-[269px]">
            <select
              id="open-in"
              className="block h-12 w-full appearance-none rounded-[3px] border-2 border-[#c1c1c1] bg-linear-to-b from-[#fdfdfd] via-[#f7f7f7] via-50% to-[#ebebeb] pl-[26px] text-[23px] text-[#333]"
            >
              <option>New Tab</option>
              <option>New Window</option>
            </select>
            <svg viewBox="0 0 16 9" className="pointer-events-none absolute top-5 right-6 h-2 w-4"><path d="M0 0h16L8 9z" /></svg>
          </div>
        </div>

        <Check id="warn-multiple" checked className="mt-[30px]">Warn you when closing window with multiple tabs</Check>
        <Check id="warn-protected" checked className="mt-[17px]">Warn you when closing window with protected tabs</Check>
        <Check id="ctrl-tab" className="mt-[33px]">Ctrl+<Key>T</Key>ab cycles through tabs in recently used order</Check>
        <Check id="switch-tab" checked className="mt-[17px]">W<Key>h</Key>en you open a link in a new tab, switch to it immediately</Check>
        <Check id="previews" className="mt-[17px]">Show tab previews in the Windows tas<Key>k</Key>bar</Check>

        <p className="mt-[29px] h-8">Hide the tab bar:</p>
        <div className="mt-[15px] flex gap-[34px]">
          <Radio id="hide-never" checked><Key>N</Key>ever</Radio>
          <Radio id="hide-one">Wh<Key>e</Key>n you have only one tab</Radio>
          <Radio id="hide-always"><Key>A</Key>lways</Radio>
        </div>

        <h2 className="mt-[142px] h-8">Language and Appearance</h2>
      </div>
    </main>
  );
}

function ScrollBar() {
  return (
    <div className="flex w-[34px] shrink-0 flex-col border border-[#b5b5b5] bg-white">
      <IconButton label="Scroll up" className="h-[33px] pt-1">
        <svg viewBox="0 0 12 8" className="h-2 w-3"><path d="M1 7l5-5 5 5" fill="none" stroke="#555" strokeWidth="2" /></svg>
      </IconButton>
      <div className="flex h-[332px] items-center justify-center border-y-2 border-[#b0b0b0] bg-[#dcdcdc]">
        <svg viewBox="0 0 12 12" className="size-3"><path d="M0 1h12M0 4.500h12M0 8h12M0 11.500h12" stroke="#444" strokeWidth="1.500" /></svg>
      </div>
      <IconButton label="Scroll down" className="mt-auto h-[34px] border-t border-[#b5b5b5]">
        <svg viewBox="0 0 12 8" className="h-2 w-3"><path d="M1 1l5 5 5-5" fill="none" stroke="#555" strokeWidth="2" /></svg>
      </IconButton>
    </div>
  );
}

/* ---------- status bar and desktop ---------- */

function StatusBar() {
  return (
    <footer className="flex h-[42px] items-center border-t-2 border-[#c8caca] bg-[#efefef] pr-1.5 pl-3.5">
      <IconButton label="Close add-on bar">
        <svg viewBox="0 0 16 16" className="size-4"><path d="M0 0l16 16M16 0L0 16" stroke="#444" strokeWidth="2" /></svg>
      </IconButton>
      <IconButton label="Stylish" className="ml-auto w-8">
        <svg viewBox="0 0 32 32" className="size-8">
          <circle cx="17" cy="17" r="15" fill="#c4c4c4" />
          <circle cx="15" cy="15" r="14" fill="#f2f2f2" />
          <path d="M23 10c-1-5-14-6-14 0 0 6 14 4 14 10 0 7-15 6-16 0" fill="none" stroke="#1d559f" strokeWidth="5.500" />
        </svg>
      </IconButton>
      <button type="button" className="ml-3 flex items-center">
        <span className="flex size-8 items-center justify-center bg-[#c70d0d] text-[14px] leading-none font-bold text-white [clip-path:polygon(30%_0,70%_0,100%_30%,100%_70%,70%_100%,30%_100%,0_70%,0_30%)]">
          ABP
        </span>
        <svg viewBox="0 0 10 6" className="h-1.5 w-2.5"><path d="M0 0h10L5 6z" /></svg>
      </button>
      <IconButton label="Greasemonkey" className="ml-3 w-8">
        <svg viewBox="0 0 32 32" className="size-8">
          <circle cx="4" cy="16" r="4" fill="#c98b3a" />
          <circle cx="28" cy="16" r="4" fill="#c98b3a" />
          <circle cx="16" cy="18" r="12" fill="#f5cf87" stroke="#a8682a" strokeWidth="2" />
          <path d="M7 10c3-6 11-6 17-9l-1 4 4-1-3 7c-5-3-11-3-17-1z" fill="#6b3412" />
          <path d="M12 13v5M20 13v5" stroke="#222" strokeWidth="3" />
          <path d="M8 22c5 2 11 2 16 0" fill="none" stroke="#b04a30" strokeWidth="3" />
        </svg>
      </IconButton>
      <IconButton label="Greasemonkey options" className="ml-[21px] w-4">
        <svg viewBox="0 0 14 8" className="h-2 w-3.5"><path d="M0 0h14L7 8z" fill="#333" /></svg>
      </IconButton>
      <IconButton label="QuickWiki" className="ml-[22px] w-8">
        <svg viewBox="0 0 32 32" className="size-8">
          <rect x="1" y="1" width="30" height="30" fill="#86a8da" stroke="#4f78c4" strokeWidth="2" />
          <path d="M13 8C5 7 1 14 4 18c3 4 10 3 11-3 0-4-2-6-5-7M11 18l6 9M17 12c0 5 0 8 3 8s4-4 4-7c0 4 0 7 2 7 3 0 4-5 4-10" fill="none" stroke="#1d4483" strokeWidth="2" />
        </svg>
      </IconButton>
      <IconButton label="Firefox" className="ml-4 w-8">
        <svg viewBox="0 0 32 32" className="size-8">
          <circle cx="16" cy="15" r="14" fill="#23569c" />
          <path d="M2 4l5 3c4-3 8-3 9 0l-4 3 4 5c-3 5 5 6 8 1 3-5 1-11-1-15 8 3 10 13 7 19-5 10-20 12-27 1C0 16 0 10 2 4z" fill="#ee8a1c" />
          <path d="M3 20c5 8 17 9 26 1-4 12-22 14-26-1z" fill="#c62e12" />
        </svg>
      </IconButton>
      <IconButton label="Lazarus" className="ml-3.5 w-8">
        <svg viewBox="0 0 32 32" className="size-8">
          <circle cx="16" cy="16" r="15.500" fill="#9b9b9b" />
          <path d="M8 8h6M18 3l-6 22h5c8 0 9-11 2-11" fill="none" stroke="#e6e6e6" strokeWidth="3.500" />
        </svg>
      </IconButton>
    </footer>
  );
}

function DesktopLabel({ children, className = "" }: { children: ReactNode; className?: string }) {
  return <span className={`w-[152px] shrink-0 text-center whitespace-pre-line ${className}`}>{children}</span>;
}

function Desktop() {
  return (
    <div className="h-[60px] overflow-hidden border-b-2 border-[#101c1b] text-[22px] leading-8 text-white">
      <div className="-mt-3.5 flex">
        <DesktopLabel>{"Firefox XP\nPortable"}</DesktopLabel>
        <DesktopLabel>{"VMware\nWorkstati..."}</DesktopLabel>
        <DesktopLabel>Safe Money</DesktopLabel>
        <DesktopLabel>{"NetObjects\nFusion Es..."}</DesktopLabel>
        <DesktopLabel className="mr-2 ml-auto">Recycle Bin</DesktopLabel>
      </div>
    </div>
  );
}

export default function App() {
  return (
    <div className="flex min-h-screen flex-col bg-[#008575] font-['Noto_Sans','Open_Sans',sans-serif]">
      <div className="mr-[5px] flex flex-1 flex-col border border-[#2f2f33] bg-[#8a1818] px-2.5 pb-[11px]">
        <TitleBar />
        <MenuBar />
        <Toolbar />
        <TabStrip />
        <div className="flex flex-1 bg-[#f1f1f1]">
          <Splitter />
          <IconStrip />
          <div className="flex min-w-0 flex-1 bg-linear-to-br from-[#f4f4f4] to-[#efefef] py-10">
            <Categories />
            <Preferences />
            <ScrollBar />
          </div>
        </div>
        <StatusBar />
      </div>
      <Desktop />
    </div>
  );
}
